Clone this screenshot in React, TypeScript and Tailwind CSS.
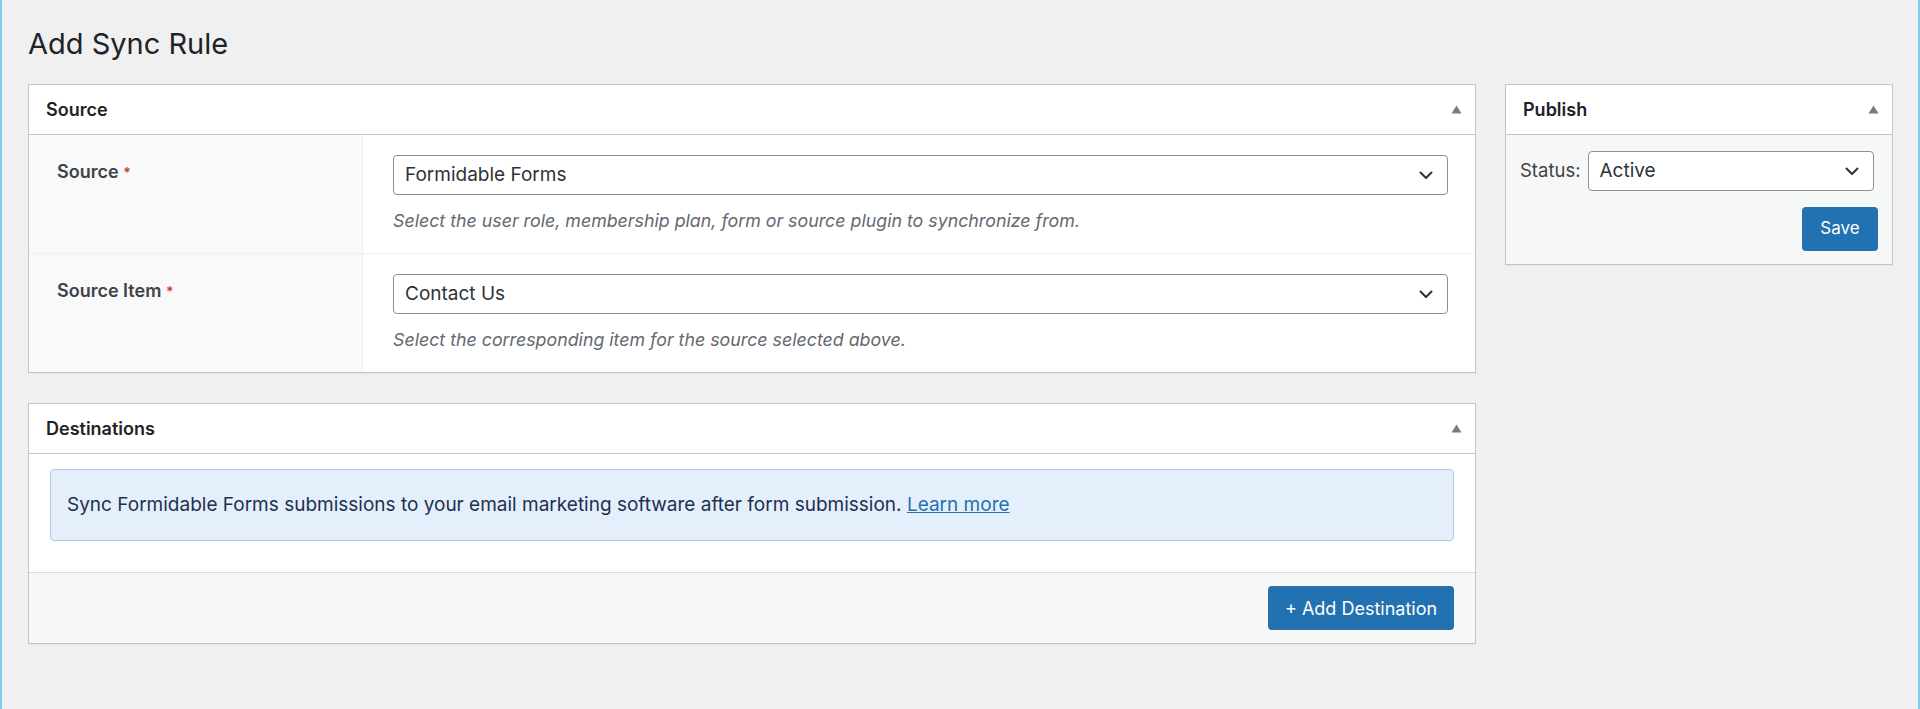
import { ReactNode } from 'react'

// ── Small drawings ────────────────────────────────────────────────────────────

function CollapseArrow() {
  return (
    <svg width="11" height="9" viewBox="0 0 11 9" className="shrink-0">
      <path d="M5.5 0.5 L10.5 8.5 L0.5 8.5 Z" fill="#787c82" />
    </svg>
  )
}

function Chevron() {
  return (
    <svg width="14" height="9" viewBox="0 0 14 9" className="shrink-0">
      <path d="M1.5 1.5 L7 7 L12.5 1.5" fill="none" stroke="#2c3338" strokeWidth="2" strokeLinecap="round" strokeLinejoin="round" />
    </svg>
  )
}

// ── Building blocks ───────────────────────────────────────────────────────────

function Panel({ title, children }: { title: string; children: ReactNode }) {
  return (
    <div className="border border-[#c3c4c7] bg-white shadow-[0_1px_1px_rgba(0,0,0,0.04)]">
      <div className="flex h-[50px] items-center justify-between border-b border-[#c3c4c7] pl-[17px] pr-[13px]">
        <h2 className="text-[18px] font-semibold text-[#1d2327]">{title}</h2>
        <CollapseArrow />
      </div>
      {children}
    </div>
  )
}

function Select({ value }: { value: string }) {
  return (
    <div className="flex h-[40px] items-center justify-between rounded-[4px] border border-[#8c8f94] bg-white pl-[11px] pr-[14px] text-[19px] text-[#2c3338]">
      <span>{value}</span>
      <Chevron />
    </div>
  )
}

function FieldRow({
  label,
  value,
  help,
  last,
}: {
  label: string
  value: string
  help: string
  last?: boolean
}) {
  return (
    <div className={last ? 'flex' : 'flex border-b border-[#f0f0f1]'}>
      <div className="w-[334px] shrink-0 border-r border-[#f0f0f1] bg-[#f9f9f9] pl-[28px] pt-[25px] text-[18px] font-semibold leading-[24px] text-[#3c434a]">
        {label} <span className="text-[14px] text-[#d63638]">*</span>
      </div>
      <div className="flex-1 pb-[21px] pl-[30px] pr-[27px] pt-[20px]">
        <Select value={value} />
        <p className="mt-[15px] text-[17.8px] italic leading-[22px] text-[#646970]">{help}</p>
      </div>
    </div>
  )
}

// ── Page ──────────────────────────────────────────────────────────────────────

export default function App() {
  return (
    <div
      className="min-h-screen border-l-2 border-r-2 border-[#86cbee] bg-[#f0f0f1] pl-[26px] pr-[25px]"
      style={{ fontFamily: 'Inter, "Noto Sans", "Liberation Sans", sans-serif' }}
    >
      <h1 className="pt-[25px] text-[29px] font-normal leading-[38px] text-[#1d2327]">Add Sync Rule</h1>

      <div className="mt-[21px] flex items-start gap-[29px]">
        {/* Main column */}
        <div className="flex w-[1448px] flex-col gap-[30px]">
          <Panel title="Source">
            <FieldRow
              label="Source"
              value="Formidable Forms"
              help="Select the user role, membership plan, form or source plugin to synchronize from."
            />
            <FieldRow
              label="Source Item"
              value="Contact Us"
              help="Select the corresponding item for the source selected above."
              last
            />
          </Panel>

          <Panel title="Destinations">
            <div className="px-[21px] pb-[31px] pt-[15px]">
              <div className="rounded-[4px] border border-[#b3c9e8] bg-[#e5effc] px-[16px] py-[23px] text-[19px] leading-[24px] text-[#1e3050]">
                Sync Formidable Forms submissions to your email marketing software after form submission.{' '}
                <a href="#" className="text-[#2271b1] underline">
                  Learn more
                </a>
              </div>
            </div>
            <div className="flex justify-end border-t border-[#dcdcde] bg-[#f6f7f7] px-[21px] py-[13px]">
              <button className="h-[44px] w-[186px] rounded-[4px] bg-[#2271b1] text-[18px] text-white">
                + Add Destination
              </button>
            </div>
          </Panel>
        </div>

        {/* Sidebar */}
        <div className="w-[388px]">
          <Panel title="Publish">
            <div className="bg-[#f6f7f7] px-[14px] pb-[13px] pt-[16px]">
              <div className="mr-[4px] flex items-center gap-[7px]">
                <span className="text-[18.5px] text-[#3c434a]">Status:</span>
                <div className="flex-1">
                  <Select value="Active" />
                </div>
              </div>
              <div className="mt-[16px] flex justify-end">
                <button className="h-[44px] w-[76px] rounded-[4px] bg-[#2271b1] text-[17px] text-white">Save</button>
              </div>
            </div>
          </Panel>
        </div>
      </div>
    </div>
  )
}
